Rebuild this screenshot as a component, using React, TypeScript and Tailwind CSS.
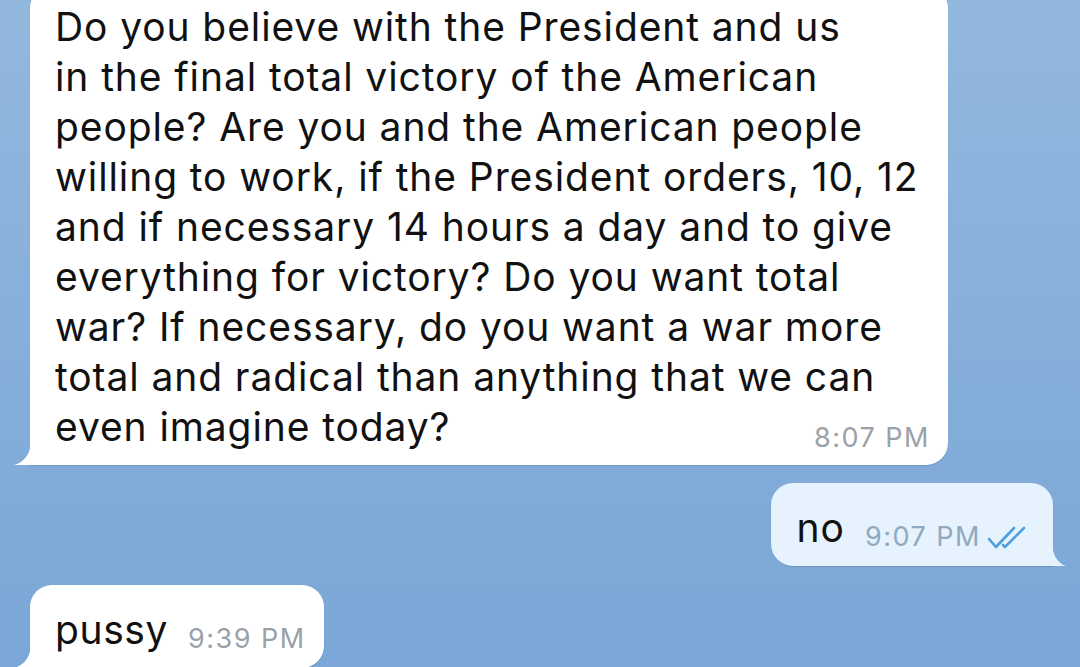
import React from 'react'

const font = { fontFamily: 'Inter, "Noto Sans", sans-serif' }

function TailLeft({ color }: { color: string }) {
  return (
    <svg className="absolute -left-[16px] bottom-0" width="18" height="26" viewBox="0 0 18 26">
      <path d="M17 0 Q17 21 0 26 L18 26 L18 0 Z" fill={color} />
    </svg>
  )
}

function TailRight({ color }: { color: string }) {
  return (
    <svg className="absolute -right-[13px] bottom-0" width="15" height="26" viewBox="0 0 15 26">
      <path d="M1 0 Q1 21 15 26 L0 26 L0 0 Z" fill={color} />
    </svg>
  )
}

function DoubleCheck() {
  return (
    <svg width="46" height="28" viewBox="0 0 46 28" fill="none" stroke="#4d9fe2" strokeWidth="2.6" strokeLinecap="round" strokeLinejoin="round">
      <path d="M2 16 L9 24 L27 5" />
      <path d="M16 22 L18 24 L37 5" />
    </svg>
  )
}

const lines = [
  'Do you believe with the President and us',
  'in the final total victory of the American',
  'people? Are you and the American people',
  'willing to work, if the President orders, 10, 12',
  'and if necessary 14 hours a day and to give',
  'everything for victory? Do you want total',
  'war? If necessary, do you want a war more',
  'total and radical than anything that we can',
  'even imagine today?',
]

export default function App() {
  return (
    <div
      className="w-[1080px] h-[667px] overflow-hidden flex flex-col bg-gradient-to-b from-[#93b8de] via-[#86afda] to-[#7aa7d7]"
      style={font}
    >
      {/* incoming long message */}
      <div className="pl-[30px] -mt-[14px]">
        <div className="relative w-[918px] bg-white rounded-[22px] rounded-bl-none shadow-[0_1px_1px_rgba(0,0,0,0.12)] pl-[25px] pr-[18px] pt-[16px] pb-[12px] flex flex-col">
          <div className="text-[39px] leading-[50px] text-[#111] tracking-[0.9px]">
            {lines.map((l, i) => (
              <div key={i} className="whitespace-nowrap">{l}</div>
            ))}
          </div>
          <span className="self-end -mt-[29px] text-[27px] leading-[30px] tracking-[1.5px] text-[#9aa1a8] whitespace-nowrap">8:07 PM</span>
          <TailLeft color="#ffffff" />
        </div>
      </div>

      {/* outgoing */}
      <div className="flex justify-end pr-[27px] mt-[18px]">
        <div className="relative bg-[#e6f2fd] rounded-[22px] rounded-br-none shadow-[0_1px_1px_rgba(0,0,0,0.12)] pl-[26px] pr-[20px] pt-[20px] pb-[13px] flex items-end">
          <span className="text-[39px] leading-[50px] tracking-[1px] text-[#111]">no</span>
          <span className="ml-[20px] text-[27px] leading-[30px] tracking-[1.5px] text-[#8fa9bf] whitespace-nowrap mb-[1px]">9:07 PM</span>
          <span className="ml-[6px] mb-[2px]"><DoubleCheck /></span>
          <TailRight color="#e6f2fd" />
        </div>
      </div>

      {/* incoming short */}
      <div className="pl-[30px] mt-[19px]">
        <div className="relative inline-flex items-end bg-white rounded-[22px] rounded-bl-none shadow-[0_1px_1px_rgba(0,0,0,0.12)] pl-[25px] pr-[18px] pt-[20px] pb-[13px]">
          <span className="text-[39px] leading-[50px] tracking-[0.6px] text-[#111]">pussy</span>
          <span className="ml-[20px] text-[27px] leading-[30px] tracking-[1.5px] text-[#9aa1a8] whitespace-nowrap mb-[1px]">9:39 PM</span>
          <TailLeft color="#ffffff" />
        </div>
      </div>
    </div>
  )
}
